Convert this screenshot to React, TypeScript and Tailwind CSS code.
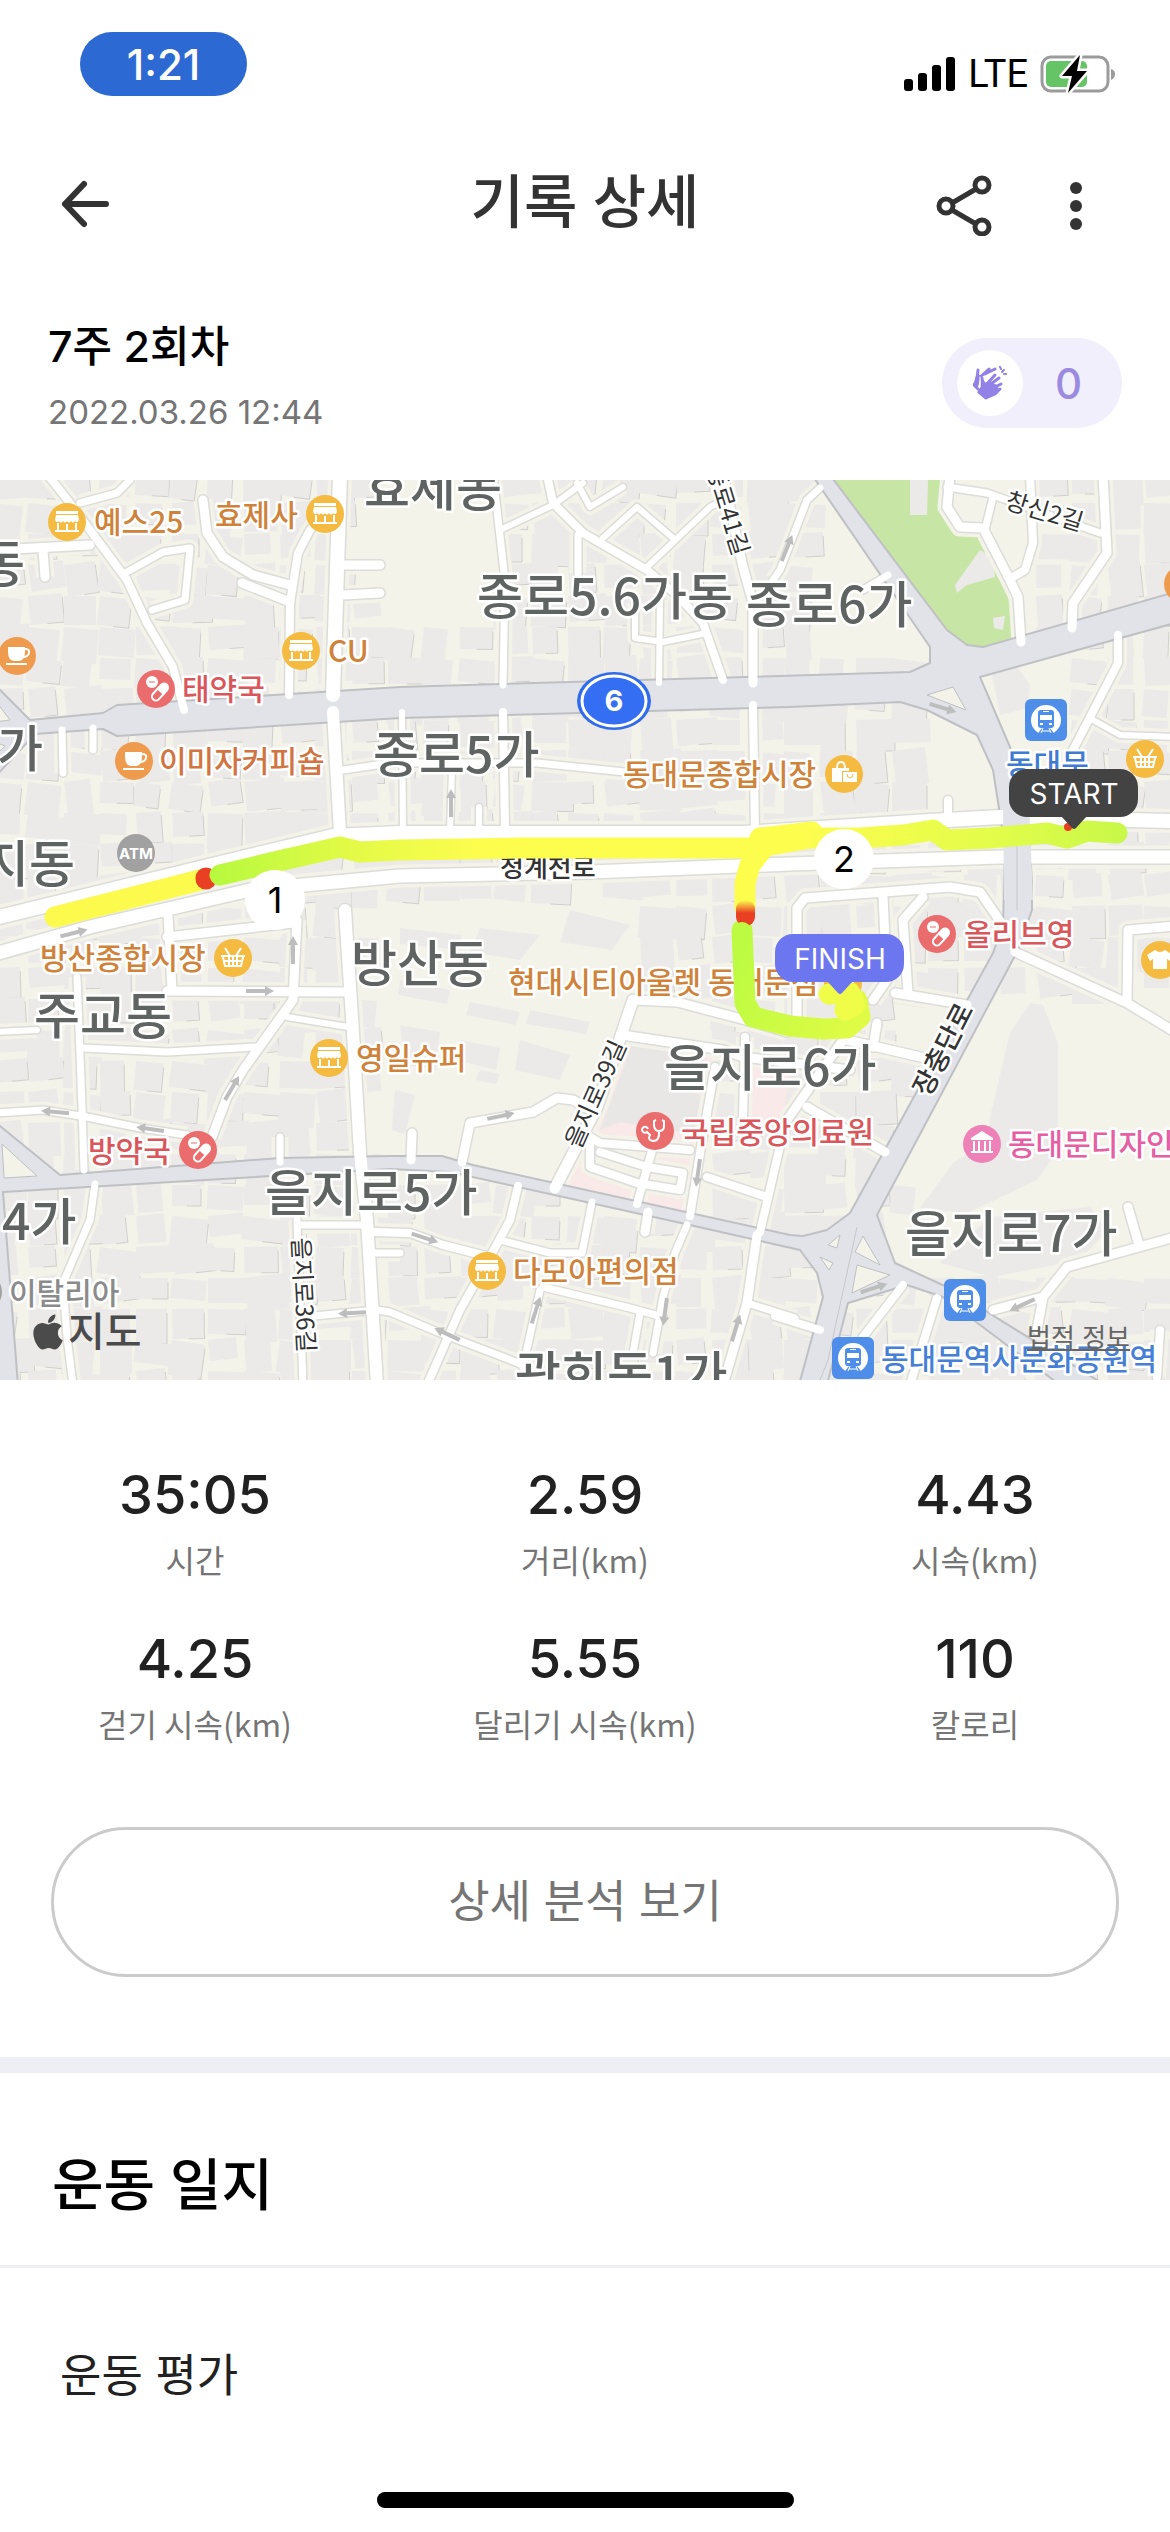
import React from 'react';
import { FaApple } from 'react-icons/fa';

type Point = [number, number];

type PlaceKind =
  | 'store'
  | 'coffee'
  | 'pill'
  | 'basket'
  | 'bag'
  | 'shirt'
  | 'museum'
  | 'hospital'
  | 'atm'
  | 'blank'
  | 'station';

interface Place {
  kind: PlaceKind;
  at: Point;
}

interface Label {
  text: string;
  at: Point;
  color?: string;
  anchor?: 'start' | 'end';
}

interface Street {
  width: number;
  d: string;
}

const STATS = [
  { value: '35:05', label: '시간' },
  { value: '2.59', label: '거리(km)' },
  { value: '4.43', label: '시속(km)' },
  { value: '4.25', label: '걷기 시속(km)' },
  { value: '5.55', label: '달리기 시속(km)' },
  { value: '110', label: '칼로리' },
];

const PLACE_COLORS: Record<PlaceKind, string> = {
  store: '#f4bb40',
  basket: '#f4bb40',
  bag: '#f4bb40',
  shirt: '#f4bb40',
  coffee: '#ee9b4e',
  pill: '#ea6c6c',
  hospital: '#ea6c6c',
  museum: '#ee82b8',
  atm: '#a1a1a1',
  blank: '#a1a1a1',
  station: '#4f8ee8',
};

const PLACES: Place[] = [
  { kind: 'store', at: [67, 42] },
  { kind: 'store', at: [325, 34] },
  { kind: 'store', at: [301, 171] },
  { kind: 'pill', at: [156, 209] },
  { kind: 'coffee', at: [17, 176] },
  { kind: 'coffee', at: [134, 281] },
  { kind: 'atm', at: [136, 373] },
  { kind: 'bag', at: [844, 294] },
  { kind: 'station', at: [1046, 240] },
  { kind: 'basket', at: [1145, 279] },
  { kind: 'coffee', at: [1183, 104] },
  { kind: 'pill', at: [937, 454] },
  { kind: 'shirt', at: [1160, 480] },
  { kind: 'basket', at: [233, 478] },
  { kind: 'store', at: [329, 578] },
  { kind: 'store', at: [843, 503] },
  { kind: 'pill', at: [198, 670] },
  { kind: 'hospital', at: [655, 651] },
  { kind: 'museum', at: [982, 664] },
  { kind: 'store', at: [487, 791] },
  { kind: 'station', at: [965, 820] },
  { kind: 'station', at: [853, 878] },
  { kind: 'blank', at: [-17, 812] },
];

const ORANGE = '#cf8239';
const RED = '#d9575b';

const PLACE_LABELS: Label[] = [
  { text: '예스25', at: [94, 53], color: ORANGE },
  { text: '효제사', at: [215, 46], color: ORANGE },
  { text: 'CU', at: [328, 182], color: ORANGE },
  { text: '태약국', at: [182, 220], color: RED },
  { text: '이미자커피숍', at: [159, 292], color: '#d17441' },
  { text: '동대문종합시장', at: [623, 305], color: ORANGE },
  { text: '동대문', at: [1006, 295], color: '#3f7bd3' },
  { text: '올리브영', at: [964, 465], color: RED },
  { text: '방산종합시장', at: [40, 489], color: ORANGE },
  { text: '영일슈퍼', at: [356, 589], color: ORANGE },
  { text: '현대시티아울렛 동대문점', at: [508, 513], color: ORANGE },
  { text: '방약국', at: [88, 682], color: RED },
  { text: '국립중앙의료원', at: [681, 663], color: RED },
  { text: '동대문디자인', at: [1008, 675], color: '#e65fa3' },
  { text: '다모아편의점', at: [513, 802], color: ORANGE },
  { text: '동대문역사문화공원역', at: [881, 890], color: '#4580d6' },
  { text: '이탈리아', at: [9, 824], color: '#8b8b8b' },
];

const DISTRICTS: Label[] = [
  { text: '효제동', at: [364, 26] },
  { text: '종로5.6가동', at: [477, 135] },
  { text: '종로6가', at: [746, 143] },
  { text: '종로5가', at: [373, 293] },
  { text: '동', at: [25, 102], anchor: 'end' },
  { text: '가', at: [43, 287], anchor: 'end' },
  { text: '지동', at: [75, 402], anchor: 'end' },
  { text: '주교동', at: [34, 554] },
  { text: '방산동', at: [351, 502] },
  { text: '4가', at: [2, 760] },
  { text: '을지로5가', at: [265, 731] },
  { text: '을지로6가', at: [664, 606] },
  { text: '을지로7가', at: [905, 772] },
  { text: '광희동1가', at: [515, 913] },
];

const STREET_NAMES = [
  { text: '청계천로', x: 500, y: 397, angle: 0, size: 26, weight: 500 },
  { text: '장충단로', x: 929, y: 618, angle: -63, size: 27, weight: 500 },
  { text: '창신2길', x: 1004, y: 28, angle: 17, size: 24, weight: 400 },
  { text: '종로41길', x: 706, y: -12, angle: 73, size: 24, weight: 400 },
  { text: '을지로36길', x: 292, y: 758, angle: 87, size: 24, weight: 400 },
  { text: '을지로39길', x: 580, y: 670, angle: -66, size: 24, weight: 400 },
];

const STREETS: Street[] = [
  // 종로 north side
  { width: 14, d: 'M340 -5 333 215' },
  { width: 8, d: 'M48 -5 73 27 127 100 147 143 173 187 184 230' },
  { width: 9, d: 'M-5 70 90 65M43 70 45 97' },
  { width: 7, d: 'M127 92 163 72 190 68 185 120 152 130M80 23 117 13 130 0' },
  { width: 9, d: 'M203 20 207 53 223 77 253 95 290 105M242 103 290 122' },
  { width: 8, d: 'M325 33 310 50 298 73 290 123 289 215' },
  { width: 9, d: 'M345 85H380M343 115 380 113' },
  { width: 8, d: 'M547 -5 553 23 583 53 647 90 680 118 703 143 723 200' },
  { width: 7, d: 'M493 -5 505 100 503 205M578 55V93' },
  { width: 6, d: 'M500 50 553 25 583 3M577 3 590 27 623 7M603 58 637 27 673 58M647 87 710 27 723 20' },
  { width: 9, d: 'M723 -5 743 87 753 123V203' },
  { width: 7, d: 'M773 100 780 90 807 20 820 8M863 110 888 95' },
  { width: 6, d: 'M635 123V158L663 162 707 153M660 120 659 203' },
  { width: 9, d: 'M950 -5 947 27 960 47 983 48 1010 100 1018 117 1021 162' },
  { width: 7, d: 'M947 7 987 13 1100 53M993 17 985 50' },
  { width: 8, d: 'M1030 -5 1033 63 1025 90 1013 97' },
  { width: 9, d: 'M1103 -5 1107 73 1073 123 1072 148' },
  // 종로 to 청계천
  { width: 12, d: 'M333 232 340 353M345 430 353 553 360 673 367 740 377 905' },
  { width: 7, d: 'M343 290 390 283H537L625 292M62 250 63 293M93 248V270' },
  { width: 8, d: 'M503 232 505 350M753 225 755 353' },
  { width: 6, d: 'M402 232 403 350M452 290 450 350M479 327V350' },
  { width: 8, d: 'M1118 155V183L1073 270M948 320V340' },
  { width: 6, d: 'M1093 240 1120 255 1175 257' },
  { width: 14, d: 'M-5 438 200 388 333 356 400 353H743L930 341 1000 337 1175 341' },
  { width: 13, d: 'M-5 474 90 447 250 410 400 396 590 392 790 384 1000 377H1175' },
  // 방산동, 주교동
  { width: 9, d: 'M168 435 172 510M167 457 293 443M167 511 347 512M297 440 293 520 243 590 227 617 212 657' },
  { width: 6, d: 'M287 537 348 547M-5 552 37 550' },
  { width: 7, d: 'M77 497 82 627 84 690M95 704 90 740 63 803 67 857 73 905' },
  { width: 7, d: 'M83 568 167 572 257 567M-5 633 43 630 87 637 140 648 187 655M280 657V682' },
  { width: 7, d: 'M300 745H365M297 740 303 905M373 773H400M303 837 377 830 390 832 440 853 503 877 523 885' },
  { width: 8, d: 'M373 752 410 753 443 765 490 777' },
  // 을지로
  { width: 9, d: 'M412 653 411 680M462 682 470 643 533 632 557 618 573 620 590 630' },
  { width: 11, d: 'M633 520 597 627 555 708' },
  { width: 9, d: 'M633 520 677 522 757 543 787 552M622 555 723 570 743 577 850 590' },
  { width: 8, d: 'M518 706 510 740 490 777 460 830 427 905' },
  { width: 7, d: 'M592 722 582 773 550 773 500 760M687 745 675 773 663 817 653 873' },
  { width: 9, d: 'M648 732 645 752M757 755 747 823 723 905' },
  { width: 7, d: 'M543 807 630 828 663 837M540 810 523 887M640 833 633 873M747 823 795 838' },
  { width: 8, d: 'M715 587 700 673 690 736M745 557 743 637M783 653 760 752M707 697 767 717' },
  { width: 8, d: 'M583 653 600 663 690 670M590 663V687L637 703 680 710 683 693 647 687 600 672M655 660 637 724' },
  { width: 9, d: 'M797 537V428L805 418 950 407 980 412 1002 444M883 417 887 500 873 520' },
  { width: 9, d: 'M923 417 903 440 908 513M895 513 920 517 967 525' },
  { width: 9, d: 'M1015 472 1127 523 1175 552M1127 523 1128 450 1175 446' },
  { width: 9, d: 'M877 543 873 567M847 560 925 578M843 560 787 640M807 627 885 672' },
  { width: 9, d: 'M1128 727 1138 762M1175 757 1067 787 1043 817 993 830M1043 817 1037 850' },
  { width: 8, d: 'M903 805 863 857M937 818 910 905M775 836 820 850M1160 850 1157 897' },
];

const AVENUES = [
  'M-5 205 30 240 103 233 117 225 400 207 780 196 910 192 930 183V167L812 -5H830L947 150 967 165 983 167 1175 112V143L980 197 1010 267 1028 337 1032 403V430L1018 470 877 735 895 783 947 807 1105 905H1060L943 817 907 805 848 823 827 905H799L823 817 817 793 800 770 690 745 450 692 390 689 3 712 18 905H-5V642L60 695 280 678 390 676H442L473 685 790 755 803 756 827 750 850 733 993 473 1003 445 1005 367 993 290 977 255 927 230 900 222 790 227 400 238 117 256 103 249 35 254 -5 297Z',
];

const ISLANDS = [
  'M-5 220 10 240-5 242Z',
  'M-5 262 5 266-5 276Z',
  'M927 215 953 207 966 230Z',
  'M2 664 37 696 4 698Z',
  'M828 765 840 755 837 768Z',
  'M863 756 855 772 880 785Z',
  'M820 777 833 783 829 790Z',
  'M857 785 890 795 852 813Z',
];

const DIRECTION_ARROWS = [
  [74, 453, -14],
  [260, 511, 0],
  [293, 470, -90],
  [232, 608, -60],
  [55, 632, 185],
  [150, 649, 188],
  [352, 833, 177],
  [501, 636, -12],
  [425, 758, 18],
  [447, 854, 205],
  [536, 830, -72],
  [665, 832, 98],
  [698, 693, 98],
  [736, 848, -73],
  [451, 323, -90],
  [943, 228, 17],
  [787, 68, -68],
  [874, 808, -18],
  [1022, 825, 155],
];

// x, y, width, height of the areas that carry no houses
const OPEN_AREAS = [
  [385, -10, 85, 130],
  [385, 425, 245, 250],
  [835, -10, 175, 170],
  [920, 530, 250, 260],
  [985, 180, 80, 100],
  [930, 240, 80, 90],
  [565, 540, 140, 180],
];

interface House {
  x: number;
  y: number;
  w: number;
  h: number;
  angle: number;
  edge: boolean;
}

function buildHouses(): House[] {
  let seed = 17;
  const next = () => {
    seed = (seed * 1103515245 + 12345) % 2147483648;
    return seed / 2147483648;
  };
  const houses: House[] = [];
  for (let y = -8; y < 900; y += 31) {
    for (let x = -8; x < 1170; x += 36) {
      const w = 24 + Math.round(next() * 18);
      const h = 20 + Math.round(next() * 16);
      const angle = Math.round(next() * 16 - 8);
      const edge = next() > 0.45;
      const open = OPEN_AREAS.some(
        ([ax, ay, aw, ah]) => x + w > ax && x < ax + aw && y + h > ay && y < ay + ah
      );
      if (!open) houses.push({ x, y, w, h, angle, edge });
    }
  }
  return houses;
}

const HOUSES = buildHouses();

function PlaceGlyph({ kind }: { kind: PlaceKind }) {
  switch (kind) {
    case 'store':
      return (
        <g fill="#fff">
          <path d="M-11 -11H11V-8H-11ZM-11 -7H11L12 -2Q10 2 8 -1Q6 2 4 -1Q2 2 0 -1Q-2 2 -4 -1Q-6 2 -8 -1Q-10 2 -12 -2Z" />
          <path d="M-9 1V8M9 1V8M0 2V8M-12 9H12" stroke="#fff" strokeWidth="2" />
        </g>
      );
    case 'coffee':
      return (
        <g fill="#fff">
          <path d="M-9 -9H8V-4Q8 5 1 5H-2Q-9 5 -9 -4Z" />
          <path d="M8 -7Q13 -7 12 -3Q11 1 6 1M-11 8H10" fill="none" stroke="#fff" strokeWidth="2" />
        </g>
      );
    case 'pill':
      return (
        <g>
          <circle cx="-4" cy="-7" r="6" fill="#fff" />
          <path d="M-7 -7H-1" stroke="#ea6c6c" strokeWidth="1" />
          <rect x="-10" y="-4" width="20" height="8" rx="4" fill="none" stroke="#fff" strokeWidth="2" transform="translate(4 3) rotate(-48)" />
          <path d="M0 -4H6A4 4 0 0 1 6 4H0Z" fill="#fff" transform="translate(4 3) rotate(-48)" />
        </g>
      );
    case 'basket':
      return (
        <path
          d="M-12 -2H12M-10 -1 -8 8H8L10 -1M-9 3H9M-4 -1V8M4 -1V8M0 -1V8M-8 -10 -3 -2M8 -10 3 -2"
          fill="none"
          stroke="#fff"
          strokeWidth="2"
        />
      );
    case 'bag':
      return (
        <g>
          <path d="M-12 -6H5V-3H-2V8H-12Z" fill="#fff" />
          <path d="M-7 -6Q-7 -12 -3 -12Q1 -12 1 -6" fill="none" stroke="#fff" strokeWidth="2" />
          <path d="M-1 -2H13V8H-1Z" fill="#fff" />
          <path d="M3 0Q3 4 6 4Q9 4 9 0" fill="none" stroke="#f4bb40" strokeWidth="1" />
        </g>
      );
    case 'shirt':
      return <path d="M-5 -10Q0 -6 5 -10L13 -5 10 1 7 -1V9H-7V-1L-10 1 -13 -5Z" fill="#fff" />;
    case 'museum':
      return (
        <g>
          <path d="M0 -13 11 -6V-4H-11V-6Z" fill="#fff" />
          <path d="M-8 -3V7M-3 -3V7M3 -3V7M8 -3V7M-11 8H11" stroke="#fff" strokeWidth="2" />
        </g>
      );
    case 'hospital':
      return (
        <path
          d="M1 -11 -1 -10V-5Q0 0 4 0Q9 0 9 -5V-10L7 -11M4 0Q5 10 -2 10Q-8 9 -5 4L-8 1A3 3 0 1 1 -7 -2"
          fill="none"
          stroke="#fff"
          strokeWidth="2"
        />
      );
    case 'atm':
      return (
        <text y="6" textAnchor="middle" fontSize="15" fontWeight="700" fill="#fff">
          ATM
        </text>
      );
    case 'station':
      return (
        <g>
          <circle r="15" fill="#fff" />
          <path d="M-7 12 -4 8H4L7 12 9 15H-9Z" fill="#4f8ee8" />
          <rect x="-8" y="-10" width="16" height="18" rx="3" fill="#4f8ee8" />
          <path d="M-6 -5H6V0H-6ZM-3 -9H3V-8H-3ZM-6 3H-3V5H-6ZM3 3H6V5H3Z" fill="#fff" />
          <path d="M-3 8 -5 13M3 8 5 13M-4 11H4" stroke="#fff" strokeWidth="1" />
        </g>
      );
    default:
      return null;
  }
}

function PlaceMarker({ kind, at }: Place) {
  return (
    <g transform={`translate(${at[0]} ${at[1]})`}>
      {kind === 'station' ? (
        <rect x="-21" y="-21" width="42" height="42" rx="6" fill={PLACE_COLORS[kind]} />
      ) : (
        <circle r="19" fill={PLACE_COLORS[kind]} />
      )}
      <PlaceGlyph kind={kind} />
    </g>
  );
}

function DistanceMarker({ at, label }: { at: Point; label: string }) {
  return (
    <g transform={`translate(${at[0]} ${at[1]})`}>
      <circle r="30" fill="#fff" />
      <text y="13" textAnchor="middle" fontSize="36" fill="#000">
        {label}
      </text>
    </g>
  );
}

function RouteFlag({ at, label, color }: { at: Point; label: string; color: string }) {
  return (
    <g transform={`translate(${at[0]} ${at[1]})`}>
      <path d="M-13 -13H13L2 -1Q0 1 -2 -1Z" fill={color} />
      <rect x="-65" y="-60" width="129" height="48" rx="18" fill={color} />
      <text y="-25" textAnchor="middle" fontSize="28" fill="#fff">
        {label}
      </text>
    </g>
  );
}

function RouteMap() {
  return (
    <section className="relative">
      <svg
        viewBox="0 0 1170 900"
        role="img"
        aria-label="운동 경로 지도"
        className="block h-auto w-full bg-[#f3f3ea] font-['Inter','Noto_Sans_CJK_KR',sans-serif]"
      >
        <defs>
          <linearGradient id="west" gradientUnits="userSpaceOnUse" x1="215" y1="0" x2="480" y2="0">
            <stop offset="0" stopColor="#b8f93f" />
            <stop offset="0.5" stopColor="#e2fa46" />
            <stop offset="1" stopColor="#fdfd4e" />
          </linearGradient>
          <linearGradient id="east" gradientUnits="userSpaceOnUse" x1="800" y1="0" x2="1125" y2="0">
            <stop offset="0" stopColor="#fdfd4e" />
            <stop offset="0.6" stopColor="#e3fc4a" />
            <stop offset="1" stopColor="#c8f849" />
          </linearGradient>
          <linearGradient id="south" gradientUnits="userSpaceOnUse" x1="745" y1="470" x2="860" y2="540">
            <stop offset="0" stopColor="#bdfb42" />
            <stop offset="1" stopColor="#dffb45" />
          </linearGradient>
          <linearGradient id="heat" x1="0" y1="0" x2="0" y2="1">
            <stop offset="0" stopColor="#fdfd4e" />
            <stop offset="0.5" stopColor="#e93f22" />
            <stop offset="1" stopColor="#e93f22" />
          </linearGradient>
        </defs>

        {/* houses */}
        {HOUSES.map((house) => (
          <g
            key={`${house.x}-${house.y}`}
            transform={`translate(${house.x} ${house.y}) rotate(${house.angle})`}
          >
            <rect width={house.w} height={house.h} fill="#ebeae9" />
            {house.edge && (
              <path
                d={`M${house.w} 4V${house.h}H${Math.round(house.w / 2)}`}
                fill="none"
                stroke="#cfcfcd"
                strokeWidth="1"
              />
            )}
          </g>
        ))}
        <g fill="#ebeae9">
          <path d="M400 448 462 455 458 470 400 464ZM480 448 540 455 520 480 470 472ZM570 430 630 445 612 470 560 462ZM400 500 450 510 447 524 398 515ZM470 522 520 532 516 545 466 535ZM530 530 590 542 586 554 526 544ZM400 545 440 552 436 590 405 585ZM460 560 500 568 496 590 456 580ZM520 560 570 575 560 600 515 590ZM395 610 415 615 405 655 392 650ZM480 590 500 594 496 604 476 600Z" />
          <path d="M990 637 1010 553 1030 523 1043 525 1058 563V670L1037 700 967 733 920 728 953 683 988 660Z" />
          <path d="M990 737 1090 727 1107 750 1080 780 993 797 940 783Z" />
          <path d="M990 185 1015 183 1030 205 1028 228 1000 235Z" />
        </g>

        {/* park and hospital grounds */}
        <path d="M833 -2H945L943 27 957 50 985 58 1017 123 1015 157 983 167 967 165 947 150Z" fill="#c7e6a5" />
        <path d="M910 0H928L927 35H910ZM955 105 980 70 993 78 995 97 967 105 957 113ZM993 138 1005 136 1003 150 994 148Z" fill="#ebeae9" />
        <path d="M630 558 712 577 690 732 565 705 597 640ZM750 590 792 573 783 640 745 640Z" fill="#f9e9e8" />
        <path d="M632 565 690 572 680 605 708 620 700 655 620 642 600 650Z" fill="#e9e6e6" />

        {/* streets */}
        {STREETS.map((street) => (
          <path key={street.d} d={street.d} fill="none" stroke="#f3f3ea" strokeWidth={street.width + 10} strokeLinejoin="round" />
        ))}
        {STREETS.map((street) => (
          <path
            key={street.d}
            d={street.d}
            fill="none"
            stroke="#dcdcd9"
            strokeWidth={street.width + 3}
            strokeLinejoin="round"
            strokeLinecap="round"
          />
        ))}
        {AVENUES.map((d) => (
          <path key={d} d={d} fill="#e1e3e8" stroke="#bfc0c3" strokeWidth="2" strokeLinejoin="round" />
        ))}
        {STREETS.map((street) => (
          <path
            key={street.d}
            d={street.d}
            fill="none"
            stroke="#fff"
            strokeWidth={street.width}
            strokeLinejoin="round"
            strokeLinecap="round"
          />
        ))}
        <path d="M1003 325 1029 320 1033 420 1004 420Z" fill="#e1e3e8" />
        {ISLANDS.map((d) => (
          <path key={d} d={d} fill="#f3f3ea" stroke="#bfc0c3" strokeWidth="1" />
        ))}
        <path d="M857 747 828 880 820 900M1017 365V430" fill="none" stroke="#c6c7ca" strokeWidth="1" />
        {DIRECTION_ARROWS.map(([x, y, angle]) => (
          <g key={`${x}-${y}`} transform={`translate(${x} ${y}) rotate(${angle})`}>
            <path d="M-14 -2H5V-5L14 0 5 5V2H-14Z" fill="#bdbdbd" />
          </g>
        ))}

        {/* names and places */}
        <g stroke="#fff" strokeWidth="5" strokeLinejoin="round" paintOrder="stroke" className="font-['Noto_Sans_CJK_KR',sans-serif]">
          {STREET_NAMES.map((street) => (
            <text
              key={street.text}
              fontSize={street.size}
              fontWeight={street.weight}
              fill="#333"
              transform={`translate(${street.x} ${street.y}) rotate(${street.angle})`}
            >
              {street.text}
            </text>
          ))}
          {PLACE_LABELS.map((label) => (
            <text key={label.text} x={label.at[0]} y={label.at[1]} fontSize="30" fontWeight="500" fill={label.color}>
              {label.text}
            </text>
          ))}
          {DISTRICTS.map((label) => (
            <text
              key={label.text}
              x={label.at[0]}
              y={label.at[1]}
              fontSize="50"
              fontWeight="500"
              fill="#5f6463"
              textAnchor={label.anchor}
            >
              {label.text}
            </text>
          ))}
        </g>
        {PLACES.map((place) => (
          <PlaceMarker key={`${place.at[0]}-${place.at[1]}`} kind={place.kind} at={place.at} />
        ))}

        {/* national route 6 */}
        <g transform="translate(614 221)">
          <ellipse rx="37" ry="29" fill="#2f6bea" />
          <ellipse rx="32" ry="25" fill="#336ef3" stroke="#fff" strokeWidth="3" />
          <text y="10" textAnchor="middle" fontSize="29" fontWeight="700" fill="#fff">
            6
          </text>
        </g>

        {/* recorded track */}
        <g fill="none" strokeWidth="21" strokeLinecap="round" strokeLinejoin="round">
          <path d="M55 437 110 423 200 400" stroke="#fdfa4e" />
          <path d="M206 398V399" stroke="#e93f22" />
          <path d="M220 395 283 380 340 367 360 372 400 370 523 368 757 368" stroke="url(#west)" />
          <path d="M760 358 812 352 810 358 765 366 750 385 745 403V427" stroke="#fdfd4e" />
          <path d="M805 358 860 358 903 355 933 350 947 360 990 358 1047 353 1067 358 1087 351 1117 353" stroke="url(#east)" />
          <path d="M742 450 745 523 753 537 790 546 823 549 847 548 860 537 857 520" stroke="url(#south)" />
          <path d="M829 514 850 513 855 525 845 530" stroke="#f0fd48" />
        </g>
        <rect x="736" y="420" width="19" height="26" rx="9" fill="url(#heat)" />
        <circle cx="742" cy="452" r="10" fill="#bdfb42" />
        <circle cx="1068" cy="347" r="4" fill="#e93f22" />

        <DistanceMarker at={[275, 420]} label="1" />
        <DistanceMarker at={[844, 379]} label="2" />
        <RouteFlag at={[1074, 349]} label="START" color="#434343" />
        <RouteFlag at={[840, 514]} label="FINISH" color="#6c77ef" />
      </svg>

      <div className="absolute bottom-6 left-8 flex items-center gap-1 text-[#4b4b4b]">
        <FaApple className="h-10 w-8" />
        <span className="text-[40px] leading-12 font-medium">지도</span>
      </div>
      <a href="#legal" className="absolute right-10 bottom-6 text-[26px] leading-9 text-[#666] underline">
        법적 정보
      </a>
    </section>
  );
}

function StatusBar() {
  return (
    <div className="flex h-32 items-start justify-between pt-8 pr-[54px] pl-20">
      <div className="flex h-16 w-[167px] items-center justify-center rounded-full bg-[#2d69d3] text-[42px] font-medium text-white">
        1:21
      </div>
      <div className="flex items-center gap-3 pt-4">
        <svg width="52" height="36" viewBox="0 0 52 36" aria-hidden="true">
          <rect x="0" y="23" width="9" height="12" rx="3" />
          <rect x="14" y="17" width="9" height="18" rx="3" />
          <rect x="28" y="9" width="9" height="26" rx="3" />
          <rect x="42" y="1" width="9" height="34" rx="3" />
        </svg>
        <span className="font-['Roboto',sans-serif] text-[38px] leading-13">LTE</span>
        <svg width="76" height="40" viewBox="0 0 76 40" aria-hidden="true">
          <rect x="2" y="3" width="66" height="34" rx="9" fill="none" stroke="#9b9b9b" strokeWidth="3" />
          <path d="M71 15Q75 16 75 20T71 26Z" fill="#9b9b9b" />
          <rect x="6" y="7" width="41" height="26" rx="5" fill="#65c466" />
          <path d="M40 1 22 22H32L28 39 47 17H37Z" fill="#000" stroke="#fff" strokeWidth="5" paintOrder="stroke" strokeLinejoin="round" />
        </svg>
      </div>
    </div>
  );
}

function Header() {
  return (
    <header className="grid h-38 grid-cols-[1fr_auto_1fr] items-center px-14 text-[#333]">
      <button type="button" aria-label="뒤로" className="justify-self-start">
        <svg width="56" height="56" viewBox="0 0 56 56" fill="none" stroke="currentColor" strokeWidth="6" strokeLinecap="round" strokeLinejoin="round">
          <path d="M28 8 9 28 28 48M9 28H50" />
        </svg>
      </button>
      <h1 className="pb-1 text-[58px] leading-20 font-medium">기록 상세</h1>
      <div className="flex items-center gap-11 justify-self-end">
        <button type="button" aria-label="공유">
          <svg width="60" height="64" viewBox="0 0 60 64" fill="none" stroke="currentColor" strokeWidth="5">
            <circle cx="12" cy="34" r="7" />
            <circle cx="48" cy="13" r="7" />
            <circle cx="48" cy="55" r="7" />
            <path d="M18 31 42 17M18 38 42 52" />
          </svg>
        </button>
        <button type="button" aria-label="더보기" className="px-8">
          <svg width="12" height="64" viewBox="0 0 12 64" fill="currentColor">
            <circle cx="6" cy="16" r="6" />
            <circle cx="6" cy="34" r="6" />
            <circle cx="6" cy="52" r="6" />
          </svg>
        </button>
      </div>
    </header>
  );
}

function ClapIcon() {
  return (
    <svg width="34" height="34" viewBox="0 0 34 34" fill="none" stroke="#9282e6" strokeLinecap="round" strokeLinejoin="round">
      <path d="M5 4 4 14 1 19 5 23M5 13 16 3M12 8 22 3" strokeWidth="3" />
      <path d="M5 11 3 19" strokeWidth="5" />
      <path d="M5 26 8 21 9 12 12 17 19 17 25 20 24 26 18 30 13 32Z" fill="#9282e6" strokeWidth="1" />
      <path d="M9 25V12M12 20 22 9M15 20 26 12M18 23 28 18M19 27 27 23" strokeWidth="3" />
      <path d="M6 26 13 32 22 28 26 24" strokeWidth="3" />
      <path d="M7 21V11" stroke="#fff" strokeWidth="1" />
      <path d="M27 1 28 3M31 4 29 6M33 8 31 8" strokeWidth="2" />
    </svg>
  );
}

export default function App() {
  return (
    <div className="flex min-h-screen flex-col bg-white font-['Inter','Noto_Sans_CJK_KR',sans-serif] text-black">
      <StatusBar />
      <Header />

      <main>
        <section className="flex items-end justify-between px-12 pt-9 pb-13">
          <div>
            <h2 className="text-[43px] leading-15 font-medium">7주 2회차</h2>
            <p className="mt-5 text-[33px] leading-8 text-[#757575]">2022.03.26 12:44</p>
          </div>
          <button
            type="button"
            aria-label="박수"
            className="flex h-[90px] w-[180px] items-center rounded-full bg-[#f1effb] pl-[15px]"
          >
            <span className="flex size-[66px] items-center justify-center rounded-full bg-white">
              <ClapIcon />
            </span>
            <span className="flex-1 pr-2 text-center text-[42px] font-medium text-[#9a8ae0]">0</span>
          </button>
        </section>

        <RouteMap />

        <dl className="grid grid-cols-3 gap-y-11 pt-[83px] text-center">
          {STATS.map((stat) => (
            <div key={stat.label} className="flex flex-col-reverse gap-2">
              <dt className="font-['Noto_Sans_CJK_KR',sans-serif] text-[32px] leading-12 text-[#757575]">
                {stat.label}
              </dt>
              <dd className="text-[54px] leading-16 font-medium text-[#212121]">{stat.value}</dd>
            </div>
          ))}
        </dl>

        <div className="px-[51px] py-20">
          <button
            type="button"
            className="h-[150px] w-full rounded-full border-3 border-[#cbcbcb] text-[45px] text-[#757575]"
          >
            상세 분석 보기
          </button>
        </div>

        <section className="border-t-16 border-[#eeeff5]">
          <h2 className="border-b-3 border-[#eeeff5] px-13 pt-18 pb-10 text-[56px] leading-20 font-medium">
            운동 일지
          </h2>
          <h3 className="px-15 pt-19 text-[45px] leading-16 text-[#212121]">운동 평가</h3>
        </section>
      </main>

      <div className="mx-auto mt-auto mb-6 h-4 w-[417px] rounded-full bg-black" />
    </div>
  );
}
